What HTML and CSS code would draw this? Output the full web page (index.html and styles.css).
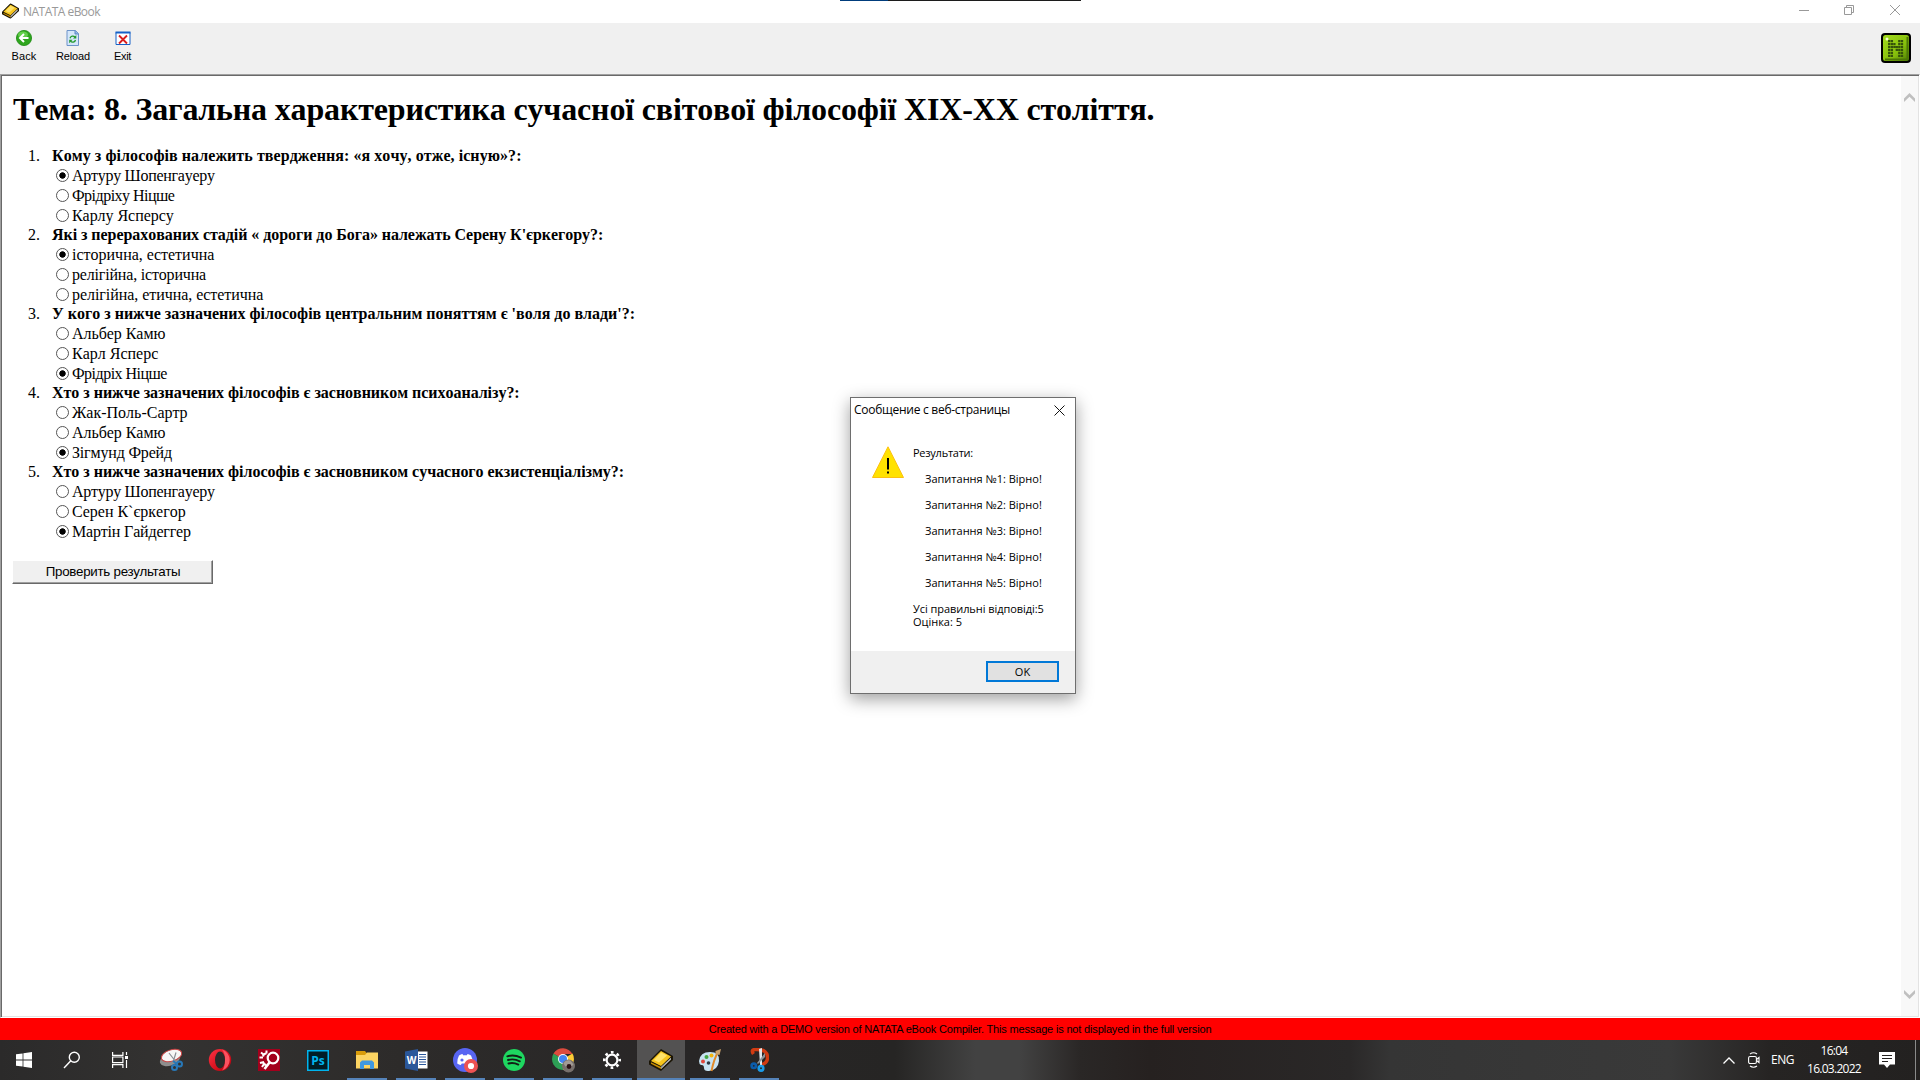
FILE: index.html
```html
<!DOCTYPE html>
<html lang="uk">
<head>
<meta charset="utf-8">
<title>NATATA eBook</title>
<link rel="stylesheet" href="styles.css">
</head>
<body>
<svg class="defs" width="0" height="0" aria-hidden="true">
  <symbol id="book" viewBox="0 0 24 22">
    <path d="M0 12 L12 0 L24 7 V11 L12 22 L0 15.500 Z" fill="#1a1405"/>
    <path d="M2 12 L12 2 L22 7.500 L12 17 Z" fill="#f7c51e"/>
    <path d="M5 11 L12 3.500 L18 6.500 L10 13.500 Z" fill="#ffe36a"/>
    <path d="M12 18 L22 8.700 V10.500 L12 20 Z" fill="#e9e9e9"/>
    <path d="M2 13.300 L12 18 V20 L2 14.800 Z" fill="#c98f00"/>
    <path d="M12 19 L22 9.600" stroke="#777" stroke-width=".7"/>
  </symbol>
</svg>

<header class="titlebar">
  <svg class="app-icon" width="17" height="16" viewBox="0 0 24 22"><use href="#book" width="24" height="22"/></svg>
  <span class="app-name">NATATA eBook</span>
  <div class="window-controls">
    <svg width="10" height="10" viewBox="0 0 10 10"><path d="M0 5.500H10" stroke="#999"/></svg>
    <svg width="10" height="10" viewBox="0 0 10 10" fill="none" stroke="#999"><path d="M.5 2.500h7v7h-7zM2.500 2.500v-2h7v7h-2"/></svg>
    <svg width="10" height="10" viewBox="0 0 10 10"><path d="M0 0L10 10M10 0L0 10" stroke="#999"/></svg>
  </div>
  <div class="top-strip"></div>
</header>

<nav class="toolbar">
  <div class="tool">
    <svg width="16" height="16" viewBox="0 0 16 16"><circle cx="8" cy="8" r="7.600" fill="#2fa51e" stroke="#1d8a12" stroke-width=".8"/><ellipse cx="7" cy="4.800" rx="5" ry="3.400" fill="#62cf4a"/><path d="M12.500 8H4.500M8 4L4 8l4 4" fill="none" stroke="#fff" stroke-width="2"/></svg>
    <span class="t-back">Back</span>
  </div>
  <div class="tool">
    <svg width="16" height="16" viewBox="0 0 16 16"><path d="M2 .5H10.500l3 3v12H2z" fill="#d4e6fa" stroke="#6d93c9"/><path d="M10 .5v3.500h3.500" fill="#8fb4e6" stroke="#5d86c4"/><path d="M5 8.300A3 3 0 0 1 10 7M10.500 10A3 3 0 0 1 5.500 11.300" fill="none" stroke="#239a2c" stroke-width="1.300"/><path d="M11.300 5v3.500H8zM4.200 13.300v-3.500H7.500z" fill="#239a2c"/></svg>
    <span class="t-reload">Reload</span>
  </div>
  <div class="tool">
    <svg width="16" height="16" viewBox="0 0 16 16"><path d="M1 2.500h14v12H1z" fill="#fff" stroke="#1560c8"/><path d="M.5 1.500h15v2H.5z" fill="#1560c8"/><path d="M4 5.500l8 8M12 5.500l-8 8" stroke="#d81e1e" stroke-width="1.800"/></svg>
    <span class="t-exit">Exit</span>
  </div>
  <svg class="brand" width="30" height="30" viewBox="0 0 30 30">
    <defs><linearGradient id="bg" x1="0" y1="0" x2="1" y2="1"><stop offset="0" stop-color="#a4dc1e"/><stop offset=".6" stop-color="#86bf0c"/><stop offset="1" stop-color="#4d7a04"/></linearGradient></defs>
    <rect width="30" height="30" rx="4" fill="#000"/><rect x="2" y="2" width="26" height="26" rx="2.500" fill="url(#bg)"/>
    <path d="M26.500 4v21.500a1 1 0 0 1-1 1H4" fill="none" stroke="#4c7706" stroke-width="2"/>
    <circle cx="6" cy="6" r="1.500" fill="#f4ffd0"/>
    <g fill="none" stroke="#34520a" stroke-width="2.300" stroke-dasharray="2.200 .8"><path d="M8.200 7v17M10.900 7v17M18.300 7v17M21 7v17"/><path d="M13.400 10v5M15.800 13v5"/></g>
  </svg>
</nav>

<div class="viewport">
  <main class="page">
    <h1>Тема: 8. Загальна характеристика сучасної світової філософії XIX-XX століття.</h1>
    <ol class="quiz">
      <li><b class="wide">Кому з філософів належить твердження: «я хочу, отже, існую»?:</b>
        <label class="snugger"><input type="radio" name="q1" checked>Артуру Шопенгауеру</label>
        <label class="tight"><input type="radio" name="q1">Фрідріху Ніцше</label>
        <label class="close"><input type="radio" name="q1">Карлу Ясперсу</label></li>
      <li><b class="close">Які з перерахованих стадій « дороги до Бога» належать Серену К'єркегору?:</b>
        <label><input type="radio" name="q2" checked>історична, естетична</label>
        <label class="snug"><input type="radio" name="q2">релігійна, історична</label>
        <label class="close"><input type="radio" name="q2">релігійна, етична, естетична</label></li>
      <li><b>У кого з нижче зазначених філософів центральним поняттям є 'воля до влади'?:</b>
        <label class="close"><input type="radio" name="q3">Альбер Камю</label>
        <label><input type="radio" name="q3">Карл Ясперс</label>
        <label class="tight"><input type="radio" name="q3" checked>Фрідріх Ніцше</label></li>
      <li><b class="near">Хто з нижче зазначених філософів є засновником психоаналізу?:</b>
        <label><input type="radio" name="q4">Жак-Поль-Сартр</label>
        <label class="close"><input type="radio" name="q4">Альбер Камю</label>
        <label class="snug"><input type="radio" name="q4" checked>Зігмунд Фрейд</label></li>
      <li><b class="near">Хто з нижче зазначених філософів є засновником сучасного екзистенціалізму?:</b>
        <label class="snugger"><input type="radio" name="q5">Артуру Шопенгауеру</label>
        <label><input type="radio" name="q5">Серен К`єркегор</label>
        <label class="snug"><input type="radio" name="q5" checked>Мартін Гайдеггер</label></li>
    </ol>
    <button class="check">Проверить результаты</button>
  </main>
  <div class="scrollbar">
    <svg width="11" height="9" viewBox="0 0 11 9"><path d="M0 5.500L5.500 0 11 5.500V9L5.500 3.800 0 9z" fill="#bfbfbf"/></svg>
    <svg width="11" height="9" viewBox="0 0 11 9"><path d="M0 3.500L5.500 9 11 3.500V0L5.500 5.200 0 0z" fill="#bfbfbf"/></svg>
  </div>
</div>

<div class="demo"><span>Created with a DEMO version of NATATA eBook Compiler. This message is not displayed in the full version</span></div>

<footer class="taskbar">
  <div class="system">
    <div class="cell"><svg width="16" height="16" viewBox="0 0 16 16" fill="#fff"><path d="M0 2.300L6.600 1.400V7.600H0zM7.400 1.300L16 0V7.600H7.400zM0 8.400H6.600V14.600L0 13.700zM7.400 8.400H16V16L7.400 14.700z"/></svg></div>
    <div class="cell"><svg width="18" height="18" viewBox="0 0 18 18" fill="none" stroke="#fff" stroke-width="1.400"><circle cx="11.300" cy="6.200" r="5"/><path d="M7.800 9.800L1 17"/></svg></div>
    <div class="cell"><svg width="16" height="16" viewBox="0 0 16 16" fill="none" stroke="#fff" stroke-width="1.200"><path d="M.6 0v3.400h10.300V0M.6 16v-3.400h10.300V16M.6 5h10.300v5.700H.6zM14.500 0v3M14.500 8v8"/><path d="M13 4h3v3h-3z" fill="#fff" stroke="none"/></svg></div>
  </div>
  <div class="apps">
    <div class="app"><svg width="24" height="24" viewBox="0 0 24 24"><ellipse cx="11" cy="11.500" rx="10.500" ry="6" fill="#8e8e8e" transform="rotate(-20 11 11.500)"/><ellipse cx="12.500" cy="7.500" rx="10.500" ry="5.600" fill="#f6f6f6" stroke="#c94545" stroke-width="1" transform="rotate(-17 12.500 7.500)"/><path d="M10 5l7 9M17 4.500l-3 10" stroke="#8a8f96" stroke-width="1.200"/><g fill="none" stroke="#2878b8" stroke-width="2"><circle cx="15.500" cy="19.500" r="2.500"/><circle cx="20.500" cy="16" r="2.500"/><path d="M14 13l4 3"/></g></svg></div>
    <div class="app"><svg width="24" height="24" viewBox="0 0 24 24"><defs><linearGradient id="op" x1="0" x2="1" y2="1"><stop offset="0" stop-color="#ff3345"/><stop offset=".6" stop-color="#d4101c"/><stop offset="1" stop-color="#a8000e"/></linearGradient></defs><ellipse cx="12" cy="12" rx="11.200" ry="11" fill="url(#op)"/><path d="M14 1.500a11 11 0 0 1 0 21c4-4 4-17 0-21" fill="#fb5260"/><ellipse cx="12" cy="12" rx="5" ry="8.400" fill="#2b2a2a"/></svg></div>
    <div class="app"><svg width="22" height="22" viewBox="0 0 22 22"><path d="M0 0h22v22H0z" fill="#a3001c"/><g fill="none" stroke="#fff"><circle cx="15" cy="9" r="5.300" stroke-width="2.200"/><path d="M11.500 13.500l-5 6.500" stroke-width="2.600"/><path d="M8.500 4.500a3.500 3.500 0 0 0-3.500 3M8.500 16a4 4 0 0 1-3.500-3" stroke-width="2"/><path d="M8.500 1.500v3M3 3.500l2.500 2M1.500 8.500h3.500M2 14l4-1M4 18l2-3" stroke-width="2"/></g></svg></div>
    <div class="app"><svg width="22" height="21" viewBox="0 0 22 21"><path d="M.75.75h20.500v19.500H.75z" fill="#001d26" stroke="#00b4ee" stroke-width="1.500"/><text x="11" y="15" text-anchor="middle" class="ps">Ps</text></svg></div>
    <div class="app open"><svg width="22" height="18" viewBox="0 0 22 18"><path d="M0 0h9l2 2.500H22V17H0z" fill="#d99c0a"/><path d="M0 4h9l2-2.500H22V17.500H0z" fill="#fcd462"/><path d="M4 18v-6.500L6 9.500h10l2 2V18h-4v-4H8v4z" fill="#3f98e0"/></svg></div>
    <div class="app open"><svg width="23" height="22" viewBox="0 0 23 22"><path d="M11 2.500h11.500v17H11z" fill="#fff"/><path d="M14 5.500h7M14 8h7M14 10.500h7M14 13h7M14 15.500h7" stroke="#2b579a" stroke-width="1.200"/><path d="M0 2.500L13 0v22L0 19.500z" fill="#2b579a"/><text x="6.500" y="15" text-anchor="middle" class="word">W</text></svg></div>
    <div class="app open"><svg width="25" height="25" viewBox="0 0 25 25"><circle cx="12" cy="12" r="12" fill="#5865f2"/><path d="M6 7.500Q8.500 5.700 9.500 6l.6 1.200h3.800l.6-1.200q1.500 0 3.500 1.500 2 3.500 1.800 8-2 1.600-3.600 1.500l-1-1.600H8.800l-1 1.600Q6 16.800 4.200 15.500 4 11 6 7.500z" fill="#fff"/><circle cx="9" cy="12" r="1.600" fill="#5865f2"/><circle cx="18" cy="18" r="7" fill="#ee5253"/><circle cx="18" cy="18" r="3.100" fill="#fff"/></svg></div>
    <div class="app open"><svg width="22" height="22" viewBox="0 0 22 22"><circle cx="11" cy="11" r="11" fill="#1ed760"/><path d="M4.300 7.300Q11 5.200 18 8.600M5 11q6-1.700 11.800 1.300M5.500 14.500q5-1.300 9.800 1.100" fill="none" stroke="#121f16" stroke-width="1.900" stroke-linecap="round"/></svg></div>
    <div class="app open"><svg width="24" height="25" viewBox="-1 0 24 25"><path d="M11 11L1.500 5.500A11 11 0 0 0 11 22z" fill="#2d9f55"/><path d="M11 11L11 22A11 11 0 0 0 20.500 5.500z" fill="#fccb35"/><path d="M1.500 5.500A11 11 0 0 1 20.500 6H11v5z" fill="#dd4b3e"/><circle cx="11" cy="11" r="5" fill="#fff"/><circle cx="11" cy="11" r="4" fill="#4285f4"/><circle cx="16.500" cy="18" r="6.500" fill="#77706c"/><path d="M11.500 15.500q2-4 7-3l3 4-3 3-5-1z" fill="#a19a94"/><circle cx="17" cy="18.500" r="2.400" fill="#2a1216"/></svg></div>
    <div class="app open"><svg width="18" height="18" viewBox="0 0 18 18" fill="none" stroke="#fff"><circle cx="9" cy="9" r="5.400" stroke-width="2.200"/><circle cx="9" cy="9" r="7.700" stroke-width="2.600" stroke-dasharray="2.700 3.348" stroke-dashoffset="1.350"/></svg></div>
    <div class="app active"><svg width="24" height="22"><use href="#book" width="24" height="22"/></svg></div>
    <div class="app open"><svg width="24" height="24" viewBox="0 0 24 24"><path d="M1 13Q2 4 12 4t9 9q-1 9-10 10-5 .5-5-3t-3-3Q1 16 1 13z" fill="#c7e3f2"/><circle cx="5" cy="13.500" r="2" fill="#e0483c"/><circle cx="8.500" cy="9" r="2" fill="#43a843"/><circle cx="13.500" cy="7.500" r="2" fill="#f2b50f"/><circle cx="10.500" cy="15" r="1.800" fill="#2d3a44"/><path d="M20 4Q16 11 13.500 23" stroke="#e08a2a" stroke-width="2" fill="none"/><path d="M17.500 3L23 1l-1.500 6-4-1z" fill="#c9a06a"/></svg></div>
    <div class="app open"><svg width="20" height="24" viewBox="-1 0 20 24"><path d="M3.500 6Q0 1 7 1.500q11 0 10.500 9-.5 5-6 6" fill="none" stroke="#d23b12" stroke-width="3.500"/><path d="M9 1l3-1v17H10z" fill="#e3e6e9"/><path d="M15 5v4L8 16l-1-1z" fill="#8d959c"/><g fill="none" stroke-width="2.600"><circle cx="3.800" cy="17.800" r="2.200" stroke="#0b5cab"/><circle cx="11" cy="20.300" r="2.300" stroke="#1b9be8"/></g></svg></div>
  </div>
  <div class="tray">
    <svg class="chevron" width="12" height="7" viewBox="0 0 12 7"><path d="M.5 6.500L6 1l5.500 5.500" fill="none" stroke="#fff" stroke-width="1.300"/></svg>
    <svg class="meet" width="12" height="16" viewBox="0 0 12 16" fill="none" stroke="#fff" stroke-width="1.100"><rect x=".6" y="4.500" width="7.800" height="7" rx="1.500"/><path d="M8.500 7.500l2.500-2v5l-2.500-2M2 2Q5.500-.5 9 2M2 14q3.500 2.500 7 0"/></svg>
    <span class="lang">ENG</span>
    <div class="clock"><span>16:04</span><span>16.03.2022</span></div>
    <svg class="notes" width="16" height="16" viewBox="0 0 16 16"><path d="M0 0h16v12.500h-5L8 16l-3-3.500H0z" fill="#fff"/><path d="M3 3.500h10M3 6.500h10M3 9.500h6" stroke="#242120"/></svg>
  </div>
</footer>

<section class="dialog">
  <header class="dialog-title"><span>Сообщение с веб-страницы</span>
    <svg width="11" height="11" viewBox="0 0 11 11"><path d="M.5.5l10 10M10.500.5l-10 10" stroke="#111"/></svg></header>
  <div class="dialog-body">
    <svg width="32" height="32" viewBox="0 0 32 32"><path d="M16 .8L31.500 31.500H.5z" fill="#ffe200" stroke="#fcc010"/><path d="M15 12h2v11.500h-2zM15 25.500h2v2h-2z" fill="#000"/></svg>
    <div class="results">
      <p class="lead">Результати:</p>
      <p class="row">Запитання №1: Вірно!</p>
      <p class="row">Запитання №2: Вірно!</p>
      <p class="row">Запитання №3: Вірно!</p>
      <p class="row">Запитання №4: Вірно!</p>
      <p class="row">Запитання №5: Вірно!</p>
      <p><span class="total">Усі правильні відповіді:5</span><br>Оцінка: 5</p>
    </div>
  </div>
  <footer class="dialog-actions"><button class="ok">OK</button></footer>
</section>
</body>
</html>
```
FILE: styles.css
```css
* { box-sizing: border-box; }
body {
  margin: 0;
  width: 1920px;
  height: 1080px;
  overflow: hidden;
  display: flex;
  flex-direction: column;
  background: #fff;
  color: #000;
  position: relative;
}
svg { display: block; flex: none; }
.defs { position: absolute; }

.titlebar {
  height: 23px;
  display: flex;
  align-items: center;
  padding: 0 20px 0 2px;
  font: 12px/16px "Open Sans", "Noto Sans", sans-serif;
  color: #999;
}
.app-icon { margin-top: -2px; }
.app-name { margin-left: 4px; letter-spacing: -0.53px; }
.window-controls { margin: -3px 0 0 auto; display: flex; gap: 35px; }
.window-controls svg:last-child { margin-left: 1px; }
.top-strip {
  position: absolute;
  left: 840px;
  top: 0;
  width: 241px;
  height: 1px;
  background: linear-gradient(90deg, #003c7c 48px, #1c1c1c 48px);
}

.toolbar {
  height: 51px;
  display: flex;
  background: #f0f0f0;
  padding: 7px 9px 0 0;
  font: 11px/13px "Liberation Sans", Arial, sans-serif;
}
.tool { width: 49px; display: flex; flex-direction: column; align-items: center; gap: 4px; }
.tool:first-child { width: 48px; }
.tool:nth-child(2) { width: 50px; }
.t-back { letter-spacing: 0.1px; }
.t-reload { letter-spacing: -0.14px; }
.t-exit { letter-spacing: -0.33px; }
.brand { margin: 3px 0 0 auto; }

.viewport {
  height: 944px;
  display: flex;
  border: 1px solid;
  border-color: #a0a0a0 #fff #fff #a0a0a0;
  box-shadow: inset 1px 1px #696969, inset -1px -1px #e3e3e3;
  padding: 1px;
}
.page {
  flex: 1;
  padding: 15px 10px 0;
  font: 16px/19px "Liberation Serif", "Times New Roman", serif;
  font-kerning: none;
}
h1 { margin: 0; padding-left: 1px; font-size: 32px; line-height: 37px; letter-spacing: -0.165px; }
.quiz { margin: 18px 0 0; padding: 0 0 0 40px; list-style: none; counter-reset: q; }
.quiz li { counter-increment: q; }
.quiz li::before {
  content: counter(q) ".";
  float: left;
  width: 28px;
  margin-left: -40px;
  text-align: right;
}
.quiz b { display: block; height: 19px; }
.quiz label { display: flex; align-items: center; height: 20px; padding-left: 4px; }
.quiz .wide { letter-spacing: 0.068px; }
.quiz .near { letter-spacing: -0.025px; }
.quiz .close { letter-spacing: -0.05px; }
.quiz .snug { letter-spacing: -0.18px; }
.quiz .snugger { letter-spacing: -0.28px; }
.quiz .tight { letter-spacing: -0.52px; }
input {
  appearance: none;
  width: 13px;
  height: 13px;
  margin: 1px 3px 0 0;
  border: 1px solid #555;
  border-radius: 50%;
  background: #fff;
}
input:checked { background: radial-gradient(circle, #000 2.8px, #fff 3.6px); }
.check {
  display: block;
  width: 201px;
  height: 24px;
  margin-top: 19px;
  padding: 0 0 0 1px;
  border: 1px solid;
  border-color: #fff #696969 #696969 #fff;
  box-shadow: inset -1px -1px #a0a0a0;
  background: #f0f0f0;
  font: 13.333px/18px "Liberation Sans", Arial, sans-serif;
  letter-spacing: -0.25px;
}
.scrollbar {
  width: 17px;
  background: #f8f8f8;
  display: flex;
  flex-direction: column;
  justify-content: space-between;
  align-items: center;
  padding: 17px 0;
}

.demo {
  height: 22px;
  background: #f00;
  text-align: center;
  font: 11px/22px "Liberation Sans", Arial, sans-serif;
  letter-spacing: -0.167px;
}

.taskbar {
  height: 40px;
  display: flex;
  color: #fff;
  background: linear-gradient(90deg, #2b2a2a 0, #333231 170px, #2d2b2a 400px, #282626 690px, #262524 895px, #424242 975px, #424242 1020px, #2a2726 1080px, #262120 1150px, #2a2828 1350px, #353535 1390px, #393939 1670px, #262423 1770px, #232120 1920px);
}
.system, .apps, .tray { display: flex; }
.cell { width: 48px; display: grid; place-items: center; }
.apps { margin-left: 3px; gap: 1px; }
.app { width: 48px; display: grid; place-items: center; }
.open { background: linear-gradient(#5583b9, #5583b9) center bottom / 40px 2px no-repeat; }
.active { background: linear-gradient(#5583b9, #5583b9) center bottom / 48px 2px no-repeat #535252; }
.ps { font: bold 12px "Open Sans", sans-serif; fill: #00b4ee; }
.word { font: bold 10px "Open Sans", sans-serif; fill: #fff; }
.tray {
  margin-left: auto;
  align-items: center;
  width: 197px;
  border-right: 1px solid #8a8a8a;
  margin-right: 4px;
  font: 12px/18px "Open Sans", "Noto Sans", sans-serif;
}
.chevron { margin-left: 4px; }
.meet { margin-left: 13px; }
.lang { width: 24px; margin-left: 11px; letter-spacing: -0.47px; }
.clock {
  width: 56px;
  margin-left: 11px;
  display: flex;
  flex-direction: column;
  align-items: center;
  letter-spacing: -0.72px;
  white-space: nowrap;
}
.notes { margin-left: 17px; }

.dialog {
  position: absolute;
  left: 850px;
  top: 397px;
  width: 226px;
  height: 297px;
  display: flex;
  flex-direction: column;
  border: 1px solid #6e6e6e;
  background: #fff;
  box-shadow: 0 5px 16px rgba(0, 0, 0, .38);
  font: 11px/13px "Open Sans", "Noto Sans", sans-serif;
}
.dialog-title {
  display: flex;
  justify-content: space-between;
  padding: 4px 10px 0 3px;
  font-size: 12px;
  line-height: 16px;
  letter-spacing: -0.274px;
}
.dialog-title svg { margin-top: 3px; }
.dialog-body { flex: 1; display: flex; padding: 28px 0 0 21px; }
.results { margin-left: 9px; }
.results p { margin: 0 0 13px; }
.results .lead { letter-spacing: -0.25px; }
.results .row { padding-left: 12px; }
.results .total { letter-spacing: -0.06px; }
.dialog-actions { height: 42px; background: #f0f0f0; padding: 10px 16px 0 0; display: flex; justify-content: flex-end; }
.ok {
  width: 73px;
  height: 21px;
  padding: 0;
  border: 2px solid #0078d7;
  background: #e1e1e1;
  font: 11px/15px "Open Sans", "Noto Sans", sans-serif;
}
```
